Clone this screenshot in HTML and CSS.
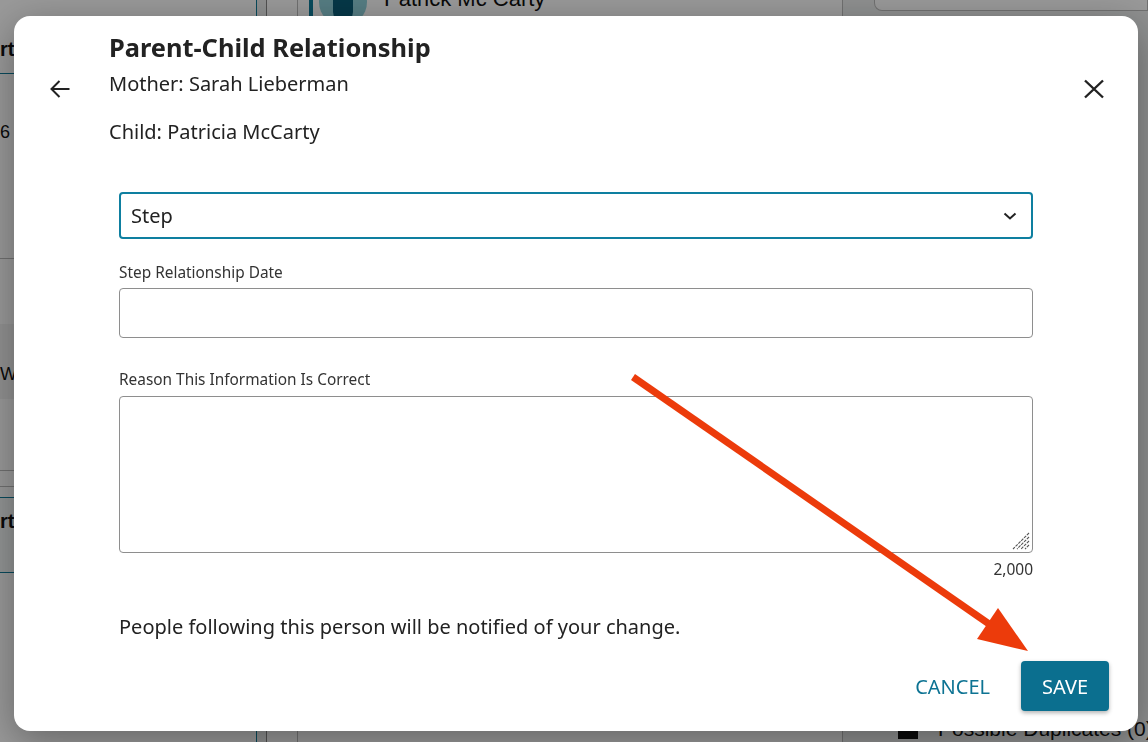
FILE: index.html
```html
<!DOCTYPE html>
<html lang="en">
<head>
<meta charset="utf-8">
<title>Parent-Child Relationship</title>
<link rel="stylesheet" href="styles.css">
</head>
<body>
<div class="app">
  <aside class="col-left">
    <div class="lcard lcard-top"><span class="frag bold">rty</span></div>
    <div class="lrow"><span class="frag">6</span></div>
    <div class="lrow lrow-tall"></div>
    <div class="lrow lrow-shade"><span class="frag">Wo</span></div>
    <div class="lrow lrow-gap"></div>
    <div class="lrow-line"></div>
    <div class="lcard lcard-sel"><span class="frag bold">rty</span></div>
    <div class="lrow-rest"></div>
  </aside>
  <div class="col-gutter"></div>
  <main class="col-mid">
    <div class="mid-rail"></div>
    <div class="mid-body">
      <div class="person">
        <div class="avatar"><div class="avatar-fig"></div></div>
        <div class="person-name">Patrick Mc Carty</div>
      </div>
    </div>
  </main>
  <div class="col-gap"></div>
  <aside class="col-right">
    <div class="rcard"></div>
    <div class="rspacer"></div>
    <div class="dupes">
      <svg class="dupes-icon" viewBox="0 0 24 24" width="24" height="24"><rect x="2" y="2" width="14" height="20" fill="#111"/><rect x="7" y="6" width="15" height="16" fill="#111"/></svg>
      <span>Possible Duplicates (0)</span>
    </div>
  </aside>
</div>

<div class="overlay"></div>

<div class="modal" role="dialog" aria-labelledby="dlg-title">
  <header class="modal-header">
    <button class="icon-btn" aria-label="Back">
      <svg viewBox="0 0 24 24" width="24" height="24"><path d="M21.5 12H3.5M11.5 4L3.5 12L11.5 20" fill="none" stroke="#222" stroke-width="2"/></svg>
    </button>
    <div class="header-text">
      <h1 id="dlg-title" class="title">Parent-Child Relationship</h1>
      <p class="subtitle">Mother: Sarah Lieberman</p>
      <p class="subtitle subtitle-child">Child: Patricia McCarty</p>
    </div>
    <button class="icon-btn close-btn" aria-label="Close">
      <svg viewBox="0 0 24 24" width="24" height="24"><path d="M3 3.5L21 20.5M21 3.5L3 20.5" fill="none" stroke="#222" stroke-width="2.4"/></svg>
    </button>
  </header>

  <form class="form">
    <div class="select">
      <span>Step</span>
      <svg class="chev" viewBox="0 0 14 8" width="14" height="8"><path d="M1.5 1.5L7 6.5L12.5 1.5" fill="none" stroke="#222" stroke-width="2"/></svg>
    </div>

    <label class="label label-date">Step Relationship Date</label>
    <div class="input"></div>

    <label class="label label-reason">Reason This Information Is Correct</label>
    <div class="textarea">
      <svg class="grip" viewBox="0 0 18 18" width="18" height="18"><path d="M17 1L1 17M17 5L5 17M17 9L9 17M17 13L13 17" stroke="#555" stroke-width="1.1" stroke-dasharray="3 1" fill="none"/></svg>
    </div>
    <div class="counter">2,000</div>

    <p class="notice">People following this person will be notified of your change.</p>
  </form>

  <footer class="modal-footer">
    <button class="btn btn-text" type="button">CANCEL</button>
    <button class="btn btn-primary" type="button">SAVE</button>
  </footer>
</div>

<svg class="annot" width="1148" height="742" viewBox="0 0 1148 742">
  <line x1="633" y1="377" x2="992" y2="626" stroke="#ec3b0b" stroke-width="7"/>
  <polygon points="1028,651 998,608 977,639" fill="#ec3b0b"/>
</svg>
</body>
</html>
```

FILE: styles.css
```css
* { box-sizing: border-box; }

html, body {
  margin: 0;
  padding: 0;
  width: 1148px;
  height: 742px;
  overflow: hidden;
}

body {
  font-family: "Noto Sans", "Open Sans", sans-serif;
  color: #222;
  background: #eef0f0;
}

/* ---------- background app ---------- */
.app {
  display: flex;
  height: 742px;
  font-family: "Liberation Sans", Arial, sans-serif;
}

.col-left {
  width: 257px;
  background: #fff;
  border-right: 1px solid #0f7c9a;
  display: flex;
  flex-direction: column;
}

.frag {
  font-size: 20px;
  color: #111;
}
.bold { font-weight: 700; }

.lcard-top {
  height: 74px;
  padding-top: 38px;
  border-bottom: 1px solid #0f7c9a;
}
.lrow {
  height: 185px;
  padding-top: 48px;
  border-bottom: 1px solid #bbb;
}
.lrow .frag { font-size: 18px; }
.lrow-tall { height: 65px; padding: 0; border-bottom: none; }
.lrow-shade {
  height: 75px;
  padding-top: 40px;
  background: #f3f3f3;
  border-bottom: none;
}
.lrow-gap {
  height: 72px;
  padding: 0;
  border-bottom: 1px solid #bbb;
}
.lrow-line {
  height: 16px;
  border-bottom: 1px solid #bbb;
  margin-bottom: 10px;
}
.lcard-sel {
  height: 76px;
  padding-top: 12px;
  background: #f4f7f7;
  border-top: 1px solid #0f7c9a;
  border-bottom: 1px solid #0f7c9a;
}
.lrow-rest { flex: 1; }

.col-gutter {
  width: 10px;
  background: #eef0f0;
  border-right: 1px solid #888;
}

.col-mid {
  width: 575px;
  display: flex;
  background: #fff;
}
.mid-rail {
  width: 31px;
  border-right: 1px solid #bbb;
}
.mid-body {
  flex: 1;
  padding-left: 11px;
}
.person {
  display: flex;
  align-items: flex-start;
  gap: 17px;
  margin-top: -22px;
  border-left: 4px solid #0f7c9a;
  padding-left: 6px;
  height: 50px;
}
.avatar {
  width: 48px;
  height: 48px;
  border-radius: 50%;
  background: #8fd0da;
  display: flex;
  justify-content: center;
  overflow: hidden;
}
.avatar-fig {
  width: 20px;
  height: 40px;
  border-radius: 10px;
  background: #0a5d78;
  margin-top: 4px;
}
.person-name {
  font-size: 22px;
  color: #111;
  line-height: 30px;
  padding-top: 6px;
  white-space: nowrap;
}

.col-gap {
  width: 32px;
  background: #eef0f0;
  border-left: 1px solid #bbb;
}

.col-right {
  flex: 1;
  display: flex;
  flex-direction: column;
  background: #eef0f0;
  overflow: hidden;
}
.rcard {
  height: 11px;
  background: #fff;
  border: 1px solid #bbb;
  border-top: none;
  border-radius: 0 0 0 8px;
}
.rspacer { flex: 1; }
.dupes {
  display: flex;
  align-items: center;
  gap: 18px;
  padding-left: 22px;
  height: 36px;
  margin-bottom: -5px;
  font-size: 21px;
  color: #111;
  white-space: nowrap;
}
.dupes-icon { flex: none; }

.overlay {
  position: fixed;
  inset: 0;
  background: rgba(0, 0, 0, 0.4);
}

/* ---------- modal ---------- */
.modal {
  position: fixed;
  left: 14px;
  top: 16px;
  width: 1124px;
  height: 715px;
  background: #fff;
  border-radius: 16px;
  box-shadow: 0 10px 40px rgba(0, 0, 0, 0.35);
  display: flex;
  flex-direction: column;
}

.modal-header {
  display: flex;
  align-items: center;
  padding: 15px 24px 0 26px;
}

.icon-btn {
  width: 40px;
  height: 40px;
  border: none;
  background: transparent;
  padding: 0;
  display: flex;
  align-items: center;
  justify-content: center;
  cursor: pointer;
}

.header-text {
  flex: 1;
  margin-left: 29px;
}

.title {
  margin: 0;
  font-size: 25.4px;
  line-height: 32px;
  font-weight: 700;
  color: #222;
}

.subtitle {
  margin: 7px 0 0;
  font-size: 20px;
  line-height: 28px;
  color: #222;
}
.subtitle-child { margin-top: 20px; }

.form {
  display: flex;
  flex-direction: column;
  padding: 0 105px;
  margin-top: 46px;
}

.select {
  height: 47px;
  border: 2px solid #0e7fa0;
  border-radius: 4px;
  display: flex;
  align-items: center;
  justify-content: space-between;
  padding: 0 14px 0 10px;
  font-size: 20px;
  color: #222;
}
.chev { display: block; }

.label {
  display: block;
  font-size: 15.4px;
  line-height: 20px;
  color: #333;
}
.label-date { margin-top: 24px; margin-bottom: 5px; }
.label-reason { margin-top: 32px; margin-bottom: 6px; }

.input {
  height: 50px;
  border: 1px solid #8e8e8e;
  border-radius: 4px;
}

.textarea {
  height: 157px;
  border: 1px solid #8e8e8e;
  border-radius: 4px;
  display: flex;
  justify-content: flex-end;
  align-items: flex-end;
  padding: 0 2px 2px 0;
}
.grip { display: block; }

.counter {
  margin-top: 6px;
  text-align: right;
  font-size: 15.5px;
  line-height: 20px;
  color: #333;
}

.notice {
  margin: 34px 0 0;
  font-size: 20px;
  line-height: 28px;
  color: #222;
}

.modal-footer {
  display: flex;
  justify-content: flex-end;
  align-items: center;
  gap: 16px;
  margin-top: auto;
  padding: 0 29px 20px 0;
}

.btn {
  font-family: "Noto Sans", "Open Sans", sans-serif;
  font-size: 20px;
  height: 50px;
  border: none;
  border-radius: 4px;
  cursor: pointer;
}
.btn-text {
  background: transparent;
  color: #0d7393;
  padding: 0 15px;
}
.btn-primary {
  background: #0b6f8f;
  color: #fff;
  width: 88px;
  padding: 0;
  box-shadow: 0 2px 4px rgba(0, 0, 0, 0.3);
}

.annot {
  position: fixed;
  left: 0;
  top: 0;
  pointer-events: none;
}
```
